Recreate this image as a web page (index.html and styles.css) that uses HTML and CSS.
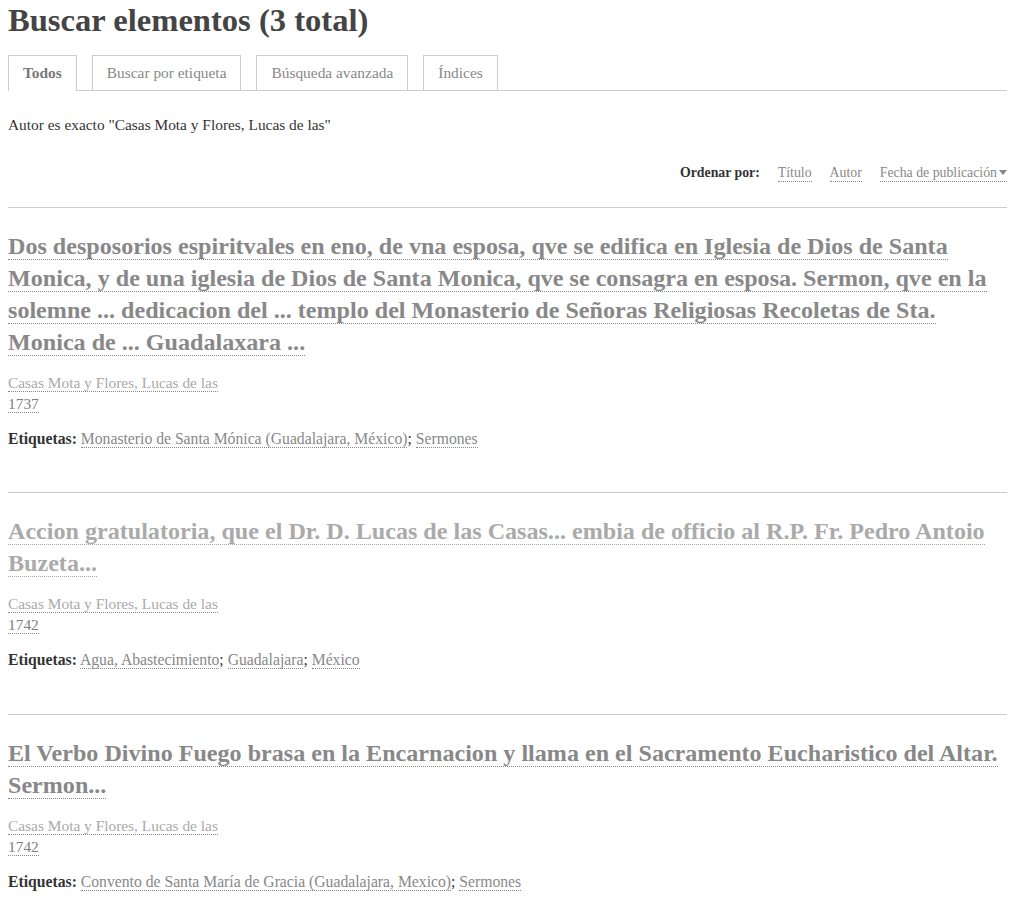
FILE: index.html
```html
<!DOCTYPE html>
<html lang="es">
<head>
<meta charset="utf-8">
<title>Buscar elementos</title>
<link rel="stylesheet" href="styles.css">
</head>
<body>
<div class="page">
  <h1 class="page-title">Buscar elementos (3 total)</h1>

  <ul class="tabs">
    <li class="tab tab-active"><a href="#">Todos</a></li>
    <li class="tab"><a href="#">Buscar por etiqueta</a></li>
    <li class="tab"><a href="#">Búsqueda avanzada</a></li>
    <li class="tab"><a href="#">Índices</a></li>
  </ul>

  <p class="filter">Autor es exacto "Casas Mota y Flores, Lucas de las"</p>

  <div class="sort">
    <span class="sort-label">Ordenar por:</span>
    <a class="sort-link" href="#">Título</a>
    <a class="sort-link" href="#">Autor</a>
    <a class="sort-link sort-current" href="#">Fecha de publicación<svg class="caret" width="8" height="5" viewBox="0 0 8 5"><path d="M0 0H8L4 5Z" fill="#888"/></svg></a>
  </div>

  <div class="item">
    <h2 class="item-title"><a href="#">Dos desposorios espiritvales en eno, de vna esposa, qve se edifica en Iglesia de Dios de Santa Monica, y de una iglesia de Dios de Santa Monica, qve se consagra en esposa. Sermon, qve en la solemne ... dedicacion del ... templo del Monasterio de Señoras Religiosas Recoletas de Sta. Monica de ... Guadalaxara ...</a></h2>
    <div class="meta"><a class="author" href="#">Casas Mota y Flores, Lucas de las</a></div>
    <div class="meta"><a class="date" href="#">1737</a></div>
    <p class="tags"><strong>Etiquetas:</strong> <a href="#">Monasterio de Santa Mónica (Guadalajara, México)</a>; <a href="#">Sermones</a></p>
  </div>

  <div class="item">
    <h2 class="item-title item-visited"><a href="#">Accion gratulatoria, que el Dr. D. Lucas de las Casas... embia de officio al R.P. Fr. Pedro Antoio Buzeta...</a></h2>
    <div class="meta"><a class="author" href="#">Casas Mota y Flores, Lucas de las</a></div>
    <div class="meta"><a class="date" href="#">1742</a></div>
    <p class="tags"><strong>Etiquetas:</strong> <a href="#">Agua, Abastecimiento</a>; <a href="#">Guadalajara</a>; <a href="#">México</a></p>
  </div>

  <div class="item">
    <h2 class="item-title"><a href="#">El Verbo Divino Fuego brasa en la Encarnacion y llama en el Sacramento Eucharistico del Altar. Sermon...</a></h2>
    <div class="meta"><a class="author" href="#">Casas Mota y Flores, Lucas de las</a></div>
    <div class="meta"><a class="date" href="#">1742</a></div>
    <p class="tags"><strong>Etiquetas:</strong> <a href="#">Convento de Santa María de Gracia (Guadalajara, Mexico)</a>; <a href="#">Sermones</a></p>
  </div>
</div>
</body>
</html>
```

FILE: styles.css
```css
html, body {
  margin: 0;
  padding: 0;
  background: #fff;
}

body {
  font-family: "Liberation Serif", "Times New Roman", serif;
  color: #333;
  font-size: 15.4px;
  line-height: 21px;
}

a {
  text-decoration: none;
}

.page {
  padding: 2px 12px 0 8px;
}

.page-title {
  margin: 0;
  font-size: 32.6px;
  line-height: 36px;
  font-weight: bold;
  color: #444;
}

.tabs {
  list-style: none;
  margin: 17px 0 0;
  padding: 0;
  display: flex;
  gap: 15px;
  border-bottom: 1px solid #ccc;
}

.tab {
  border: 1px solid #ccc;
  border-bottom: none;
  background: #fff;
}

.tab a {
  display: block;
  padding: 0 14px;
  line-height: 34px;
  height: 34px;
  font-size: 15.4px;
  color: #888;
}

.tab-active {
  margin-bottom: -1px;
}

.tab-active a {
  height: 35px;
  font-weight: bold;
  color: #777;
}

.filter {
  margin: 23px 0 0;
  color: #333;
}

.sort {
  margin-top: 27px;
  padding-bottom: 24px;
  border-bottom: 1px solid #ccc;
  display: flex;
  justify-content: flex-end;
  align-items: baseline;
  gap: 18px;
  font-size: 13.8px;
}

.sort-label {
  font-weight: bold;
  color: #333;
}

.sort-link {
  color: #888;
  border-bottom: 1px dotted #888;
  line-height: 17px;
}

.caret {
  margin-left: 2px;
  vertical-align: 2px;
}

.item {
  padding: 22px 0 44px;
  border-bottom: 1px solid #ccc;
}

.sort + .item {
  padding-bottom: 43px;
}

.item-title {
  margin: 0 0 14px;
  font-size: 24.1px;
  line-height: 32px;
  font-weight: bold;
}

.item-title a {
  color: #888;
  border-bottom: 1px dotted #888;
}

.item-visited a {
  color: #aaa;
  border-bottom-color: #aaa;
}

.meta a {
  border-bottom: 1px dotted #888;
}

.meta .author {
  color: #aaa;
}

.meta .date {
  color: #808080;
}

.tags {
  margin: 14px 0 0;
  font-size: 15.7px;
}

.tags strong {
  color: #333;
}

.tags a {
  color: #888;
  border-bottom: 1px dotted #888;
}
```
